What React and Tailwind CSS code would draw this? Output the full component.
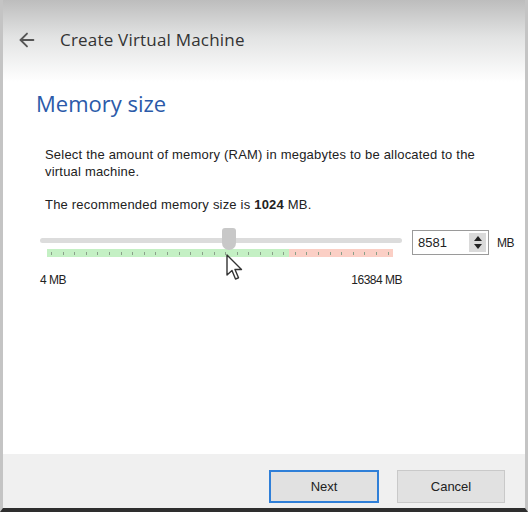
import { ArrowLeft } from "lucide-react";

const TICKS = Array.from({ length: 30 }, (_, i) => i);

function Cursor() {
  return (
    <svg
      className="absolute left-[225px] top-[254px]"
      width="20"
      height="28"
      viewBox="0 0 20 28"
    >
      <path
        d="M2 1 L2 21 L7 16.5 L10.5 25 L13.5 23.8 L10 15.5 L16.5 15.5 Z"
        fill="#fff"
        stroke="#333"
        strokeWidth="1.4"
        strokeLinejoin="round"
      />
    </svg>
  );
}

function MemorySlider() {
  return (
    <div className="flex items-start gap-[10px] pl-[40px]">
      <div className="w-[362px]">
        <div className="relative h-[20px]">
          <div className="absolute left-0 right-0 top-[9px] h-[5px] rounded-full bg-[#dcdcdc]" />
          <div className="absolute left-[182px] top-[-1px] w-[14px] h-[22px] rounded-t-[3px] rounded-b-[7px] bg-[#c8c8c8]" />
        </div>
        <div className="ml-[7px] mr-[9px] flex h-[8px] items-center justify-between bg-[linear-gradient(to_right,#c4f0c4_0%,#c4f0c4_70%,#fbcfc5_70%,#fbcfc5_100%)] px-[4px]">
          {TICKS.map((t) => (
            <span key={t} className="h-[3px] w-px bg-[#8aa08a]" />
          ))}
        </div>
        <div className="mt-[14px] flex justify-between text-[12px] tracking-[-0.5px] text-[#222]">
          <span>4 MB</span>
          <span>16384 MB</span>
        </div>
      </div>
      <div className="mt-[1px] flex items-center gap-[8px]">
        <div className="flex h-[25px] w-[77px] items-center border border-[#9a9a9a] bg-white">
          <span className="flex-1 pl-[5px] text-[13px] text-[#222]">8581</span>
          <div className="mr-[2px] flex h-[19px] w-[17px] flex-col items-center justify-center bg-[#dadada]">
            <svg width="10" height="15" viewBox="0 0 10 15">
              <path d="M5 1 L9 6 L1 6 Z" fill="#222" />
              <path d="M5 14 L9 9 L1 9 Z" fill="#222" />
            </svg>
          </div>
        </div>
        <span className="text-[12px] tracking-[-0.5px] text-[#222]">MB</span>
      </div>
    </div>
  );
}

export default function App() {
  return (
    <div className="relative flex h-[514px] w-[532px] bg-white font-['Liberation_Sans',Arial,sans-serif]">
      <div className="flex h-[512px] w-[528px] flex-col border-x-[3px] border-b-[4px] border-x-[#c4c4c4] border-b-[#2e2e2e]">
        <header className="flex h-[82px] items-center gap-[22px] bg-[linear-gradient(to_bottom,#bdbdbd,#e2e3e3_45%,#ffffff)] pl-[13px] pb-[3px]">
          <ArrowLeft className="h-[22px] w-[22px] text-[#555]" strokeWidth={2} />
          <h1 className="font-['Open_Sans',sans-serif] text-[17px] tracking-[0.2px] text-[#333]">
            Create Virtual Machine
          </h1>
        </header>

        <main className="flex-1 bg-white">
          <h2 className="ml-[33px] mt-[6px] font-['Open_Sans',sans-serif] text-[22px] leading-[30px] text-[#2b5aa9]">
            Memory size
          </h2>
          <p className="ml-[42px] mt-[28px] w-[445px] text-[13px] leading-[17px] tracking-[0.2px] text-[#222]">
            Select the amount of memory (RAM) in megabytes to be allocated to
            the virtual machine.
          </p>
          <p className="ml-[42px] mt-[16px] text-[13px] leading-[17px] tracking-[0.2px] text-[#222]">
            The recommended memory size is <b>1024</b> MB.
          </p>
          <div className="mt-[16px] -ml-[3px]">
            <MemorySlider />
          </div>
        </main>

        <footer className="flex h-[54px] items-end justify-end gap-[18px] bg-[#f0f0f0] pr-[20px] pb-[5px]">
          <button className="h-[33px] w-[110px] border-2 border-[#2f7fd8] bg-[#e1e1e1] text-[13px] text-[#222]">
            Next
          </button>
          <button className="h-[33px] w-[108px] border border-[#c9c9c9] bg-[#e1e1e1] text-[13px] text-[#222]">
            Cancel
          </button>
        </footer>
      </div>
      <Cursor />
    </div>
  );
}
